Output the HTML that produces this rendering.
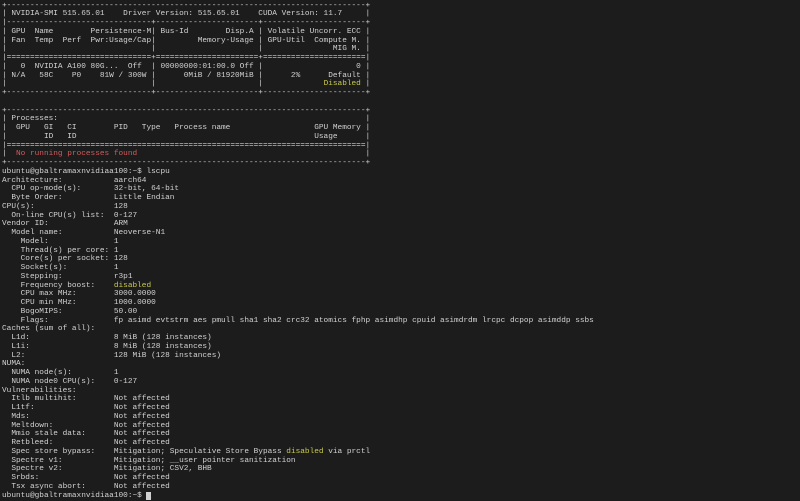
<!DOCTYPE html>
<html><head><meta charset="utf-8"><style>
html,body{margin:0;padding:0;background:#1c1c1c;width:800px;height:501px;overflow:hidden}
pre{position:absolute;left:2px;top:1.5px;margin:0;font-family:"Liberation Mono",monospace;font-size:7.78px;line-height:8.75px;color:#d2d2d2;white-space:pre}
.y{color:#c9c94a}.r{color:#d35a5a}
.cur{background:#d0d0d0;color:#d0d0d0}
</style></head><body><pre>+-----------------------------------------------------------------------------+
| NVIDIA-SMI 515.65.01    Driver Version: 515.65.01    CUDA Version: 11.7     |
|-------------------------------+----------------------+----------------------+
| GPU  Name        Persistence-M| Bus-Id        Disp.A | Volatile Uncorr. ECC |
| Fan  Temp  Perf  Pwr:Usage/Cap|         Memory-Usage | GPU-Util  Compute M. |
|                               |                      |               MIG M. |
|===============================+======================+======================|
|   0  NVIDIA A100 80G...  Off  | 00000000:01:00.0 Off |                    0 |
| N/A   58C    P0    81W / 300W |      0MiB / 81920MiB |      2%      Default |
|                               |                      |             <span class="y">Disabled</span> |
+-------------------------------+----------------------+----------------------+

+-----------------------------------------------------------------------------+
| Processes:                                                                  |
|  GPU   GI   CI        PID   Type   Process name                  GPU Memory |
|        ID   ID                                                   Usage      |
|=============================================================================|
|  <span class="r">No running processes found</span>                                                 |
+-----------------------------------------------------------------------------+
ubuntu@gbaltramaxnvidiaa100:~$ lscpu
Architecture:           aarch64
  CPU op-mode(s):       32-bit, 64-bit
  Byte Order:           Little Endian
CPU(s):                 128
  On-line CPU(s) list:  0-127
Vendor ID:              ARM
  Model name:           Neoverse-N1
    Model:              1
    Thread(s) per core: 1
    Core(s) per socket: 128
    Socket(s):          1
    Stepping:           r3p1
    Frequency boost:    <span class="y">disabled</span>
    CPU max MHz:        3000.0000
    CPU min MHz:        1000.0000
    BogoMIPS:           50.00
    Flags:              fp asimd evtstrm aes pmull sha1 sha2 crc32 atomics fphp asimdhp cpuid asimdrdm lrcpc dcpop asimddp ssbs
Caches (sum of all):
  L1d:                  8 MiB (128 instances)
  L1i:                  8 MiB (128 instances)
  L2:                   128 MiB (128 instances)
NUMA:
  NUMA node(s):         1
  NUMA node0 CPU(s):    0-127
Vulnerabilities:
  Itlb multihit:        Not affected
  L1tf:                 Not affected
  Mds:                  Not affected
  Meltdown:             Not affected
  Mmio stale data:      Not affected
  Retbleed:             Not affected
  Spec store bypass:    Mitigation; Speculative Store Bypass <span class="y">disabled</span> via prctl
  Spectre v1:           Mitigation; __user pointer sanitization
  Spectre v2:           Mitigation; CSV2, BHB
  Srbds:                Not affected
  Tsx async abort:      Not affected
ubuntu@gbaltramaxnvidiaa100:~$ <span class="cur">_</span></pre></body></html>
